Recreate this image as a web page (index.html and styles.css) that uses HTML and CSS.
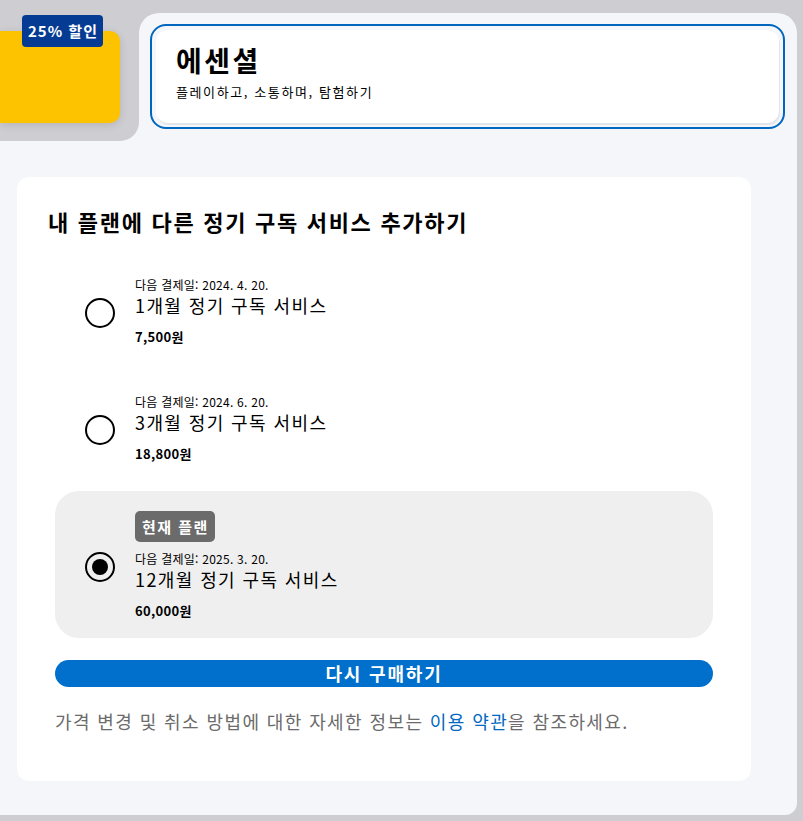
FILE: index.html
```html
<!DOCTYPE html>
<html lang="ko">
<head>
<meta charset="utf-8">
<title>정기 구독 서비스</title>
<link rel="stylesheet" href="styles.css">
</head>
<body>
<div class="shell">
  <div class="top-row">
    <div class="tab-wrap">
      <div class="tab">
        <div class="promo">
          <span class="promo-badge">25% 할인</span>
        </div>
      </div>
    </div>
    <div class="header-panel">
      <div class="header-ring">
        <div class="header-card">
          <h1 class="plan-title">에센셜</h1>
          <p class="plan-sub">플레이하고, 소통하며, 탐험하기</p>
        </div>
      </div>
    </div>
  </div>
  <div class="body-panel">
    <section class="card">
      <h2 class="card-title">내 플랜에 다른 정기 구독 서비스 추가하기</h2>
      <div class="options">
        <label class="option">
          <span class="radio"></span>
          <span class="opt-text">
            <span class="opt-date">다음 결제일: 2024. 4. 20.</span>
            <span class="opt-name">1개월 정기 구독 서비스</span>
            <span class="opt-price">7,500원</span>
          </span>
        </label>
        <label class="option">
          <span class="radio"></span>
          <span class="opt-text">
            <span class="opt-date">다음 결제일: 2024. 6. 20.</span>
            <span class="opt-name">3개월 정기 구독 서비스</span>
            <span class="opt-price">18,800원</span>
          </span>
        </label>
        <label class="option option-current">
          <span class="radio radio-on"></span>
          <span class="opt-text">
            <span class="current-badge">현재 플랜</span>
            <span class="opt-date">다음 결제일: 2025. 3. 20.</span>
            <span class="opt-name">12개월 정기 구독 서비스</span>
            <span class="opt-price">60,000원</span>
          </span>
        </label>
      </div>
      <button class="buy-btn" type="button">다시 구매하기</button>
      <p class="note">가격 변경 및 취소 방법에 대한 자세한 정보는 <a class="note-link" href="#">이용 약관</a>을 참조하세요.</p>
    </section>
  </div>
</div>
</body>
</html>
```
FILE: styles.css
```css
* { box-sizing: border-box; }
html, body { margin: 0; padding: 0; }
body {
  background: #cdcdd2;
  font-family: "Noto Sans CJK KR", "Noto Sans", sans-serif;
  color: #000;
  width: 803px;
  height: 821px;
  overflow: hidden;
}
.shell {
  width: 797px;
}
.top-row {
  display: flex;
  height: 141px;
}
.tab-wrap {
  width: 139px;
  background: #f5f6fa;
  flex: none;
}
.tab {
  height: 141px;
  background: #cdcdd2;
  border-bottom-right-radius: 19px;
  padding-top: 31px;
}
.promo {
  position: relative;
  width: 120px;
  height: 92px;
  background: #fdc200;
  border-radius: 0 10px 10px 0;
  box-shadow: 0 2px 8px rgba(0,0,0,0.12);
}
.promo-badge {
  position: absolute;
  left: 22px;
  top: -16px;
  height: 32px;
  padding: 0 5px 0 6px;
  background: #063b94;
  color: #fff;
  font-weight: 700;
  font-size: 15px;
  letter-spacing: 1px;
  line-height: 32px;
  border-radius: 4px;
  white-space: nowrap;
}
.header-panel {
  flex: 1;
  margin-top: 13px;
  background: #f5f6fa;
  border-radius: 20px 20px 0 0;
  padding: 11px 12px 12px 11px;
}
.header-ring {
  border: 2px solid #0067c0;
  border-radius: 16px;
  padding: 4px;
  height: 105px;
}
.header-card {
  background: #fff;
  border-radius: 12px;
  height: 93px;
  box-shadow: 1px 2px 0 #e3e4ea;
  padding: 11px 20px 0 20px;
}
.plan-title {
  margin: 0;
  font-size: 28px;
  font-weight: 700;
  letter-spacing: 2.5px;
  line-height: 38px;
}
.plan-sub {
  margin: 4px 0 0 0;
  font-size: 13px;
  letter-spacing: 1.6px;
  line-height: 18px;
}
.body-panel {
  background: #f5f6fa;
  height: 674px;
  border-radius: 0 0 12px 0;
  padding: 36px 46px 0 17px;
}
.card {
  background: #fff;
  border-radius: 12px;
  height: 604px;
  padding: 28px 38px 0 38px;
}
.card-title {
  margin: 0 0 0 -7px;
  font-size: 22px;
  font-weight: 700;
  letter-spacing: 1.7px;
  line-height: 32px;
}
.options {
  margin-top: 20px;
  display: flex;
  flex-direction: column;
  gap: 10px;
}
.option {
  display: flex;
  align-items: center;
  padding: 20px 30px 16px 30px;
  border-radius: 24px;
  cursor: pointer;
}
.option-current {
  background: #efefef;
}
.radio {
  flex: none;
  width: 30px;
  height: 30px;
  border: 2px solid #000;
  border-radius: 50%;
  position: relative;
}
.radio-on::after {
  content: "";
  position: absolute;
  left: 5px;
  top: 5px;
  width: 16px;
  height: 16px;
  border-radius: 50%;
  background: #000;
}
.opt-text {
  margin-left: 20px;
  display: flex;
  flex-direction: column;
  align-items: flex-start;
}
.current-badge {
  background: #6b6b6b;
  color: #fff;
  font-weight: 700;
  font-size: 15px;
  letter-spacing: 1.5px;
  line-height: 31px;
  height: 31px;
  padding: 0 6px 0 7px;
  border-radius: 5px;
  margin-bottom: 9px;
}
.opt-date {
  font-size: 12px;
  letter-spacing: 0.25px;
  line-height: 16px;
}
.opt-name {
  font-size: 18px;
  letter-spacing: 1.4px;
  line-height: 24px;
}
.opt-price {
  margin-top: 9px;
  font-size: 13px;
  font-weight: 700;
  letter-spacing: 0.3px;
  line-height: 22px;
}
.buy-btn {
  display: block;
  width: 100%;
  margin-top: 22px;
  height: 27px;
  border: none;
  border-radius: 14px;
  background: #0070cc;
  color: #fff;
  font-family: inherit;
  font-size: 18px;
  font-weight: 700;
  letter-spacing: 1.8px;
  line-height: 27px;
  padding: 0;
}
.note {
  margin: 22px 0 0 0;
  font-size: 18px;
  letter-spacing: 1.4px;
  line-height: 24px;
  color: #6b6b6b;
}
.note-link {
  color: #0068c0;
  text-decoration: none;
}
```
